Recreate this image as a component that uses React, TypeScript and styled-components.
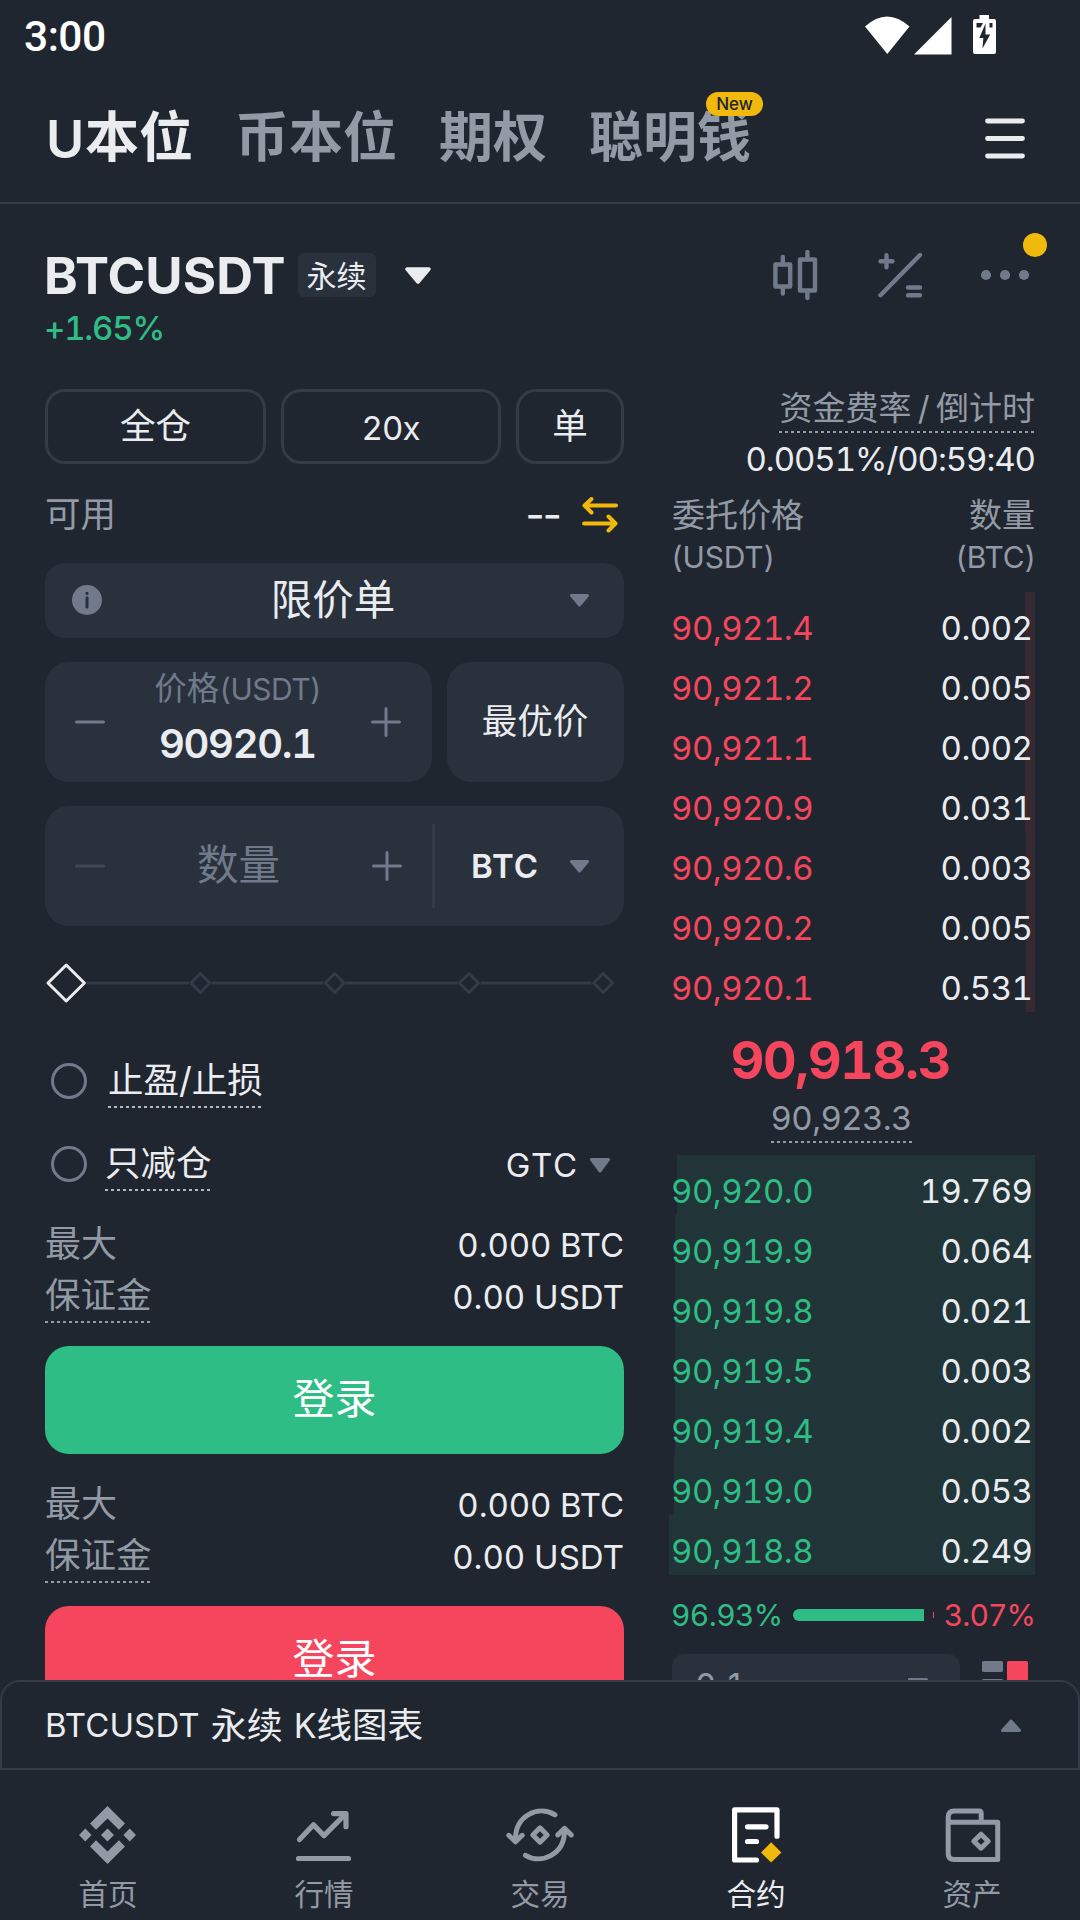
import React from "react";
import styled, { createGlobalStyle } from "styled-components";

const color = {
  bg: "#202630",
  input: "#29313d",
  line: "#333b47",
  primary: "#eaecef",
  secondary: "#929aa5",
  tertiary: "#707a8a",
  underline: "#b4b8bf",
  buy: "#2ebd85",
  sell: "#f6465d",
  brand: "#f0b90b",
};

const GlobalStyle = createGlobalStyle`
  *, *::before, *::after { box-sizing: border-box; }
  body {
    margin: 0;
    background: ${color.bg};
    color: ${color.primary};
    font-family: Inter, "Noto Sans CJK SC", sans-serif;
    font-variant-numeric: tabular-nums;
  }
`;

const Screen = styled.div`
  width: 1080px;
  height: 1920px;
  overflow: hidden;
  display: flex;
  flex-direction: column;
  background: ${color.bg};
`;

const Text = styled.span<{ $size?: number; $color?: string; $weight?: number; $ls?: number }>`
  flex: none;
  white-space: nowrap;
  line-height: 1;
  font-size: ${(p) => p.$size ?? 33}px;
  font-weight: ${(p) => p.$weight ?? 400};
  color: ${(p) => p.$color ?? color.primary};
  letter-spacing: ${(p) => p.$ls ?? 0}px;
  margin-right: ${(p) => -(p.$ls ?? 0)}px;
`;

/* ---------- status bar ---------- */

const StatusBar = styled.header`
  flex: none;
  height: 72px;
  padding: 0 84px 0 24px;
  display: flex;
  justify-content: space-between;
`;

const Clock = styled.span`
  font: 500 42.5px/74px Roboto, sans-serif;
  letter-spacing: -0.5px;
  color: #fff;
`;

const StatusIcons = styled.svg`
  margin-top: 10px;
`;

/* ---------- top tabs ---------- */

const TopTabs = styled.nav`
  flex: none;
  height: 132px;
  padding: 5px 52px 4px 46px;
  border-bottom: 2px solid ${color.line};
  display: flex;
  align-items: center;
  gap: 42px;
`;

const TabItem = styled.div<{ $active?: boolean }>`
  position: relative;
  display: flex;
  align-items: center;
  font-size: 54px;
  line-height: 60px;
  font-weight: 700;
  color: ${(p) => (p.$active ? color.primary : color.secondary)};
`;

const TabLatin = styled.span`
  font-size: 52px;
  font-weight: 600;
  width: 39px;
  padding-top: 5px;
`;

const NewBadge = styled.span`
  position: absolute;
  top: -16px;
  left: 117px;
  width: 57px;
  height: 24px;
  border-radius: 12px;
  background: ${color.brand};
  color: ${color.bg};
  font-size: 17px;
  font-weight: 500;
  line-height: 24px;
  text-align: center;
`;

const MenuIcon = styled.svg`
  margin-left: auto;
`;

/* ---------- pair header ---------- */

const PairHeader = styled.section`
  flex: none;
  height: 180px;
  padding: 45px 45px 0 44px;
`;

const PairRow = styled.div`
  height: 52px;
  display: flex;
  align-items: center;
`;

const ContractTag = styled.span`
  margin-left: 12px;
  width: 78px;
  height: 44px;
  border-radius: 6px;
  background: ${color.input};
  font-size: 30px;
  line-height: 46px;
  text-align: center;
`;

const PairCaret = styled.svg`
  margin-left: 29px;
`;

const PairTools = styled.div`
  margin-left: auto;
  display: flex;
  align-items: center;
  gap: 45px;
`;

const MoreButton = styled.div`
  position: relative;
  display: flex;
`;

const NoticeDot = styled.i`
  position: absolute;
  top: -16px;
  right: -12px;
  width: 24px;
  height: 24px;
  border-radius: 50%;
  background: ${color.brand};
`;

const Change = styled.div`
  height: 40px;
  margin-top: 7px;
  display: flex;
  align-items: center;
`;

/* ---------- trading body ---------- */

const Body = styled.main`
  flex: none;
  height: 1296px;
  padding: 0 45px;
  overflow: hidden;
  display: flex;
  align-items: flex-start;
  gap: 48px;
`;

const OrderForm = styled.section`
  width: 579px;
  padding-top: 5px;
  display: flex;
  flex-direction: column;
`;

const ModeRow = styled.div`
  display: grid;
  grid-template-columns: 221px 220px 108px;
  gap: 15px;
`;

const ModeButton = styled.div<{ $drop?: number }>`
  height: 75px;
  padding-top: ${(p) => p.$drop ?? 0}px;
  border: 3px solid ${color.line};
  border-radius: 20px;
  display: flex;
  align-items: center;
  justify-content: center;
`;

const AvailableRow = styled.div`
  height: 99px;
  padding: 3px 6px 0 0;
  display: flex;
  align-items: center;
  justify-content: space-between;
`;

const Inline = styled.div<{ $gap: number }>`
  display: flex;
  align-items: center;
  gap: ${(p) => p.$gap}px;
`;

const Select = styled.div`
  height: 75px;
  padding: 0 35px 1px 27px;
  border-radius: 20px;
  background: ${color.input};
  display: flex;
  align-items: center;
`;

const SelectLabel = styled.span`
  flex: 1;
  padding-right: 6px;
  font-size: 41.5px;
  line-height: 44px;
  text-align: center;
`;

const PriceRow = styled.div`
  margin-top: 24px;
  display: grid;
  grid-template-columns: 387px 177px;
  gap: 15px;
`;

const Field = styled.div`
  height: 120px;
  padding-right: 1px;
  border-radius: 24px;
  background: ${color.input};
  display: flex;
  align-items: center;
  justify-content: center;
`;

const Stepper = styled.div`
  width: 387px;
  height: 100%;
  padding: 0 30px;
  display: flex;
  align-items: center;
  justify-content: space-between;
`;

const PriceStack = styled.div`
  height: 100%;
  padding-top: 11px;
  display: flex;
  flex-direction: column;
  align-items: center;
  gap: 18px;
`;

const QuantityField = styled(Field)`
  margin-top: 24px;
  padding-right: 0;
  justify-content: flex-start;
`;

const UnitSelect = styled.div`
  flex: 1;
  height: 84px;
  padding: 1px 35px 0 36px;
  border-left: 3px solid ${color.line};
  display: flex;
  align-items: center;
  justify-content: space-between;
`;

const SliderBox = styled.div`
  height: 114px;
  display: flex;
  align-items: center;
`;

const OptionRow = styled.div<{ $h: number }>`
  height: ${(p) => p.$h}px;
  padding: 0 14px 0 6px;
  display: flex;
  align-items: center;
`;

const Radio = styled.i<{ $gap: number }>`
  width: 36px;
  height: 36px;
  margin-right: ${(p) => p.$gap}px;
  border: 3px solid ${color.tertiary};
  border-radius: 50%;
`;

const Hint = styled.span<{ $h: number; $line: string }>`
  display: inline-flex;
  align-items: center;
  height: ${(p) => p.$h}px;
  background: repeating-linear-gradient(90deg, ${(p) => p.$line} 0 3px, transparent 3px 6px) left bottom / 100% 2px no-repeat;
`;

const TimeInForce = styled.div`
  margin-left: auto;
  padding-top: 3px;
  display: flex;
  align-items: center;
  gap: 13px;
`;

const Summary = styled.div<{ $top: number }>`
  padding-top: ${(p) => p.$top}px;
`;

const SummaryRow = styled.div`
  height: 52px;
  display: flex;
  align-items: center;
  justify-content: space-between;
`;

const SummaryLabel = styled.div`
  height: 52px;
  margin-top: -3px;
  display: flex;
  align-items: center;
`;

const LoginButton = styled.div<{ $color: string }>`
  flex: none;
  height: 108px;
  margin-top: 23px;
  padding-bottom: 2px;
  border-radius: 24px;
  background: ${(p) => p.$color};
  display: flex;
  align-items: center;
  justify-content: center;
`;

/* ---------- order book ---------- */

const OrderBook = styled.section`
  width: 363px;
  display: flex;
  flex-direction: column;
`;

const Funding = styled.div`
  display: flex;
  flex-direction: column;
  align-items: flex-end;
`;

const FundingLabel = styled(Text)`
  word-spacing: -2.5px;
`;

const Countdown = styled.div`
  height: 52px;
  margin-right: -1px;
  display: flex;
  align-items: center;
`;

const BookHead = styled.div`
  height: 107px;
  padding-top: 8px;
  display: flex;
  justify-content: space-between;
`;

const BookHeadCell = styled.div<{ $end?: boolean }>`
  display: flex;
  flex-direction: column;
  align-items: ${(p) => (p.$end ? "flex-end" : "flex-start")};
`;

const HeadName = styled.span`
  font-size: 33px;
  line-height: 44px;
  color: ${color.secondary};
`;

const HeadUnit = styled.span`
  margin: 0 -1px;
  font-size: 30px;
  line-height: 41px;
  color: ${color.secondary};
  letter-spacing: -0.2px;
`;

const BookRow = styled.div<{ $depth: number; $tint: string }>`
  height: 60px;
  margin-left: -3px;
  padding: 12px 2px 0;
  display: flex;
  align-items: center;
  justify-content: space-between;
  background: linear-gradient(${(p) => p.$tint}, ${(p) => p.$tint}) right top / ${(p) => p.$depth}px 100% no-repeat;
`;

const LastPrice = styled.div`
  height: 143px;
  padding-top: 16px;
  display: flex;
  flex-direction: column;
  align-items: center;
`;

const LastPriceValue = styled.div`
  height: 65px;
  margin-right: 25px;
  display: flex;
  align-items: center;
`;

const MarkPrice = styled.div`
  margin-right: 24px;
`;

const RatioRow = styled.div`
  height: 79px;
  margin: 0 -1px;
  display: flex;
  align-items: center;
`;

const RatioBar = styled.div`
  flex: 1;
  margin: 0 10px 0 10px;
  display: flex;
  align-items: center;
  justify-content: space-between;
`;

const RatioBuy = styled.i`
  flex: none;
  width: 131px;
  height: 12px;
  border-radius: 6px 0 0 6px;
  background: ${color.buy};
`;

const RatioSell = styled.i`
  flex: none;
  width: 1px;
  height: 6px;
  background: ${color.sell};
`;

const BookFooter = styled.div`
  display: flex;
  justify-content: space-between;
  padding-right: 7px;
`;

const TickSelect = styled.div`
  width: 288px;
  height: 62px;
  padding: 0 32px 0 23px;
  border-radius: 12px;
  background: ${color.input};
  display: flex;
  align-items: center;
  justify-content: space-between;
`;

const BookLayoutIcon = styled.svg`
  margin-top: 7px;
`;

/* ---------- bottom ---------- */

const ChartPanel = styled.section`
  flex: none;
  height: 90px;
  padding: 1px 57px 0 43px;
  border: 2px solid ${color.line};
  border-radius: 20px 20px 0 0;
  display: flex;
  align-items: center;
  justify-content: space-between;
`;

const ChartTitle = styled.div`
  display: flex;
  align-items: center;
  gap: 11px;
`;

const BottomNav = styled.nav`
  flex: none;
  height: 150px;
  padding-top: 35px;
  display: grid;
  grid-template-columns: repeat(5, 216px);
`;

const NavItem = styled.div<{ $active?: boolean }>`
  display: flex;
  flex-direction: column;
  align-items: center;
  gap: 14px;
  color: ${(p) => (p.$active ? color.primary : color.secondary)};
  font-size: 29.6px;
  line-height: 30px;
`;

/* ---------- icons ---------- */

const Caret = ({ w, h, fill, up }: { w: number; h: number; fill: string; up?: boolean }) => (
  <svg width={w} height={h} viewBox={`0 0 ${w} ${h}`}>
    <path
      d={up ? `M${w / 2} 2 L${w - 1.5} ${h - 1.5} H1.5 Z` : `M1.5 1.5 H${w - 1.5} L${w / 2} ${h - 2} Z`}
      fill={fill}
      stroke={fill}
      strokeWidth="3"
      strokeLinejoin="round"
    />
  </svg>
);

const Minus = ({ faded }: { faded?: boolean }) => (
  <svg width="30" height="30" viewBox="0 0 30 30">
    <path d="M1.5 15H28.5" stroke={faded ? "#414855" : color.tertiary} strokeWidth="3" strokeLinecap="round" />
  </svg>
);

const Plus = () => (
  <svg width="30" height="30" viewBox="0 0 30 30">
    <path d="M1.5 15H28.5M15 1.5V28.5" stroke={color.tertiary} strokeWidth="3" strokeLinecap="round" />
  </svg>
);

const TransferIcon = () => (
  <svg width="36" height="36" viewBox="0 0 36 36" fill="none" stroke={color.brand} strokeWidth="4" strokeLinecap="round" strokeLinejoin="round">
    <path d="M34 8.5H2.5M9.5 2L2.5 8.5L9.5 15.5M2 26.5H33.5M26.5 19.5L33.5 26.5L26.5 33.5" />
  </svg>
);

const InfoIcon = () => (
  <svg width="30" height="30" viewBox="0 0 30 30">
    <circle cx="15" cy="15" r="15" fill={color.tertiary} />
    <path d="M15 12.8V22" stroke={color.input} strokeWidth="3" strokeLinecap="round" />
    <circle cx="15" cy="8.4" r="1.6" fill={color.input} />
  </svg>
);

const CandleIcon = () => (
  <svg width="46" height="52" viewBox="0 0 46 52" fill="none" stroke={color.tertiary} strokeWidth="4.4" strokeLinecap="round" strokeLinejoin="round">
    <path d="M9.8 8V15M9.8 38V44.5M34.4 3V10M34.4 42V49" />
    <rect x="2.4" y="15.5" width="14.8" height="22" />
    <rect x="27" y="10.5" width="15" height="31" />
  </svg>
);

const CalculatorIcon = () => (
  <svg width="46" height="52" viewBox="0 0 46 52" fill="none" stroke={color.tertiary} strokeWidth="4.4" strokeLinecap="round">
    <path d="M2.5 46.2L42 6M2.5 12.2H14.5M8.5 6.2V18.2M30 38.5H42M30 46.2H42" />
  </svg>
);

const MoreIcon = () => (
  <svg width="66" height="52" viewBox="0 0 66 52" fill={color.tertiary}>
    <circle cx="17" cy="26" r="5.1" />
    <circle cx="36" cy="26" r="5.1" />
    <circle cx="55" cy="26" r="5.1" />
  </svg>
);

const SizeSlider = () => (
  <svg width="579" height="42" viewBox="0 0 579 42" fill="none" stroke={color.line} strokeWidth="3" strokeLinejoin="round">
    <path d="M41 21H144M167 21H278M301 21H412.5M435.5 21H546.5" />
    {[155.4, 289.7, 424, 558.2].map((x) => (
      <path key={x} d={`M${x - 9.5} 21L${x} 11.5L${x + 9.5} 21L${x} 30.5Z`} />
    ))}
    <path d="M3 21L21.2 3L39.4 21L21.2 39Z" stroke={color.primary} />
  </svg>
);

const HomeIcon = () => (
  <svg width="60" height="60" viewBox="0 0 60 60" fill="currentColor">
    <path d="M29.5 1L47 18.5L41 24.8L29.5 13.5L18 24.8L12 18.5Z" />
    <path d="M29.5 59L47 41.5L41 35.2L29.5 46.5L18 35.2L12 41.5Z" />
    <path d="M29.5 23.4L36 30L29.5 36.6L23 30Z" />
    <path d="M7.3 23.4L13.6 30L7.3 36.6L1 30Z" />
    <path d="M51.7 23.4L58 30L51.7 36.6L45.4 30Z" />
  </svg>
);

const MarketIcon = () => (
  <svg width="60" height="60" viewBox="0 0 60 60" fill="none" stroke="currentColor" strokeWidth="5.2" strokeLinecap="round" strokeLinejoin="round">
    <path d="M5.5 34.5L19.5 19.7L30 30.7L51.5 9M39.6 8.6H52V21.7M4.5 53.5H54.5" />
  </svg>
);

const TradeIcon = () => (
  <svg width="68" height="60" viewBox="0 0 68 60" fill="none" stroke="currentColor" strokeWidth="5" strokeLinecap="round" strokeLinejoin="round">
    <path d="M49 9.8C32 -0.5 9.5 11 9.5 34" />
    <path d="M2.8 30.3L9.5 36.8L16.2 30.3" />
    <path d="M19.5 50.3C36 60 58.5 49 58.5 26" />
    <path d="M51.8 29.9L58.5 23.4L65.2 29.9" />
    <path d="M34 22.8L41.2 30L34 37.2L26.8 30Z" />
  </svg>
);

const FuturesIcon = () => (
  <svg width="60" height="60" viewBox="0 0 60 60" fill="none" stroke="#fff" strokeWidth="5.2" strokeLinecap="round" strokeLinejoin="round">
    <path d="M30.5 55H8.6V4.8H51V31.2M21.5 21.8H40M21.5 36.5H30.5" />
    <path d="M45.2 37.2L55.4 47.4L45.2 57.6L35 47.4Z" fill={color.brand} stroke="none" />
  </svg>
);

const WalletIcon = () => (
  <svg width="60" height="60" viewBox="0 0 60 60" fill="none" stroke="currentColor" strokeWidth="5" strokeLinejoin="round">
    <path d="M6.2 17V12Q6.2 6 12.2 6H37Q39.2 6 39.2 8.2V17.2M6.2 16V48.7Q6.2 54.5 12.2 54.5H55.7V17.2H6.2" />
    <path d="M39 29.2L46.2 36.2L39 43.2L31.8 36.2Z" />
  </svg>
);

/* ---------- data ---------- */

type Level = { price: string; amount: string; depth: number };

const asks: Level[] = [
  { price: "90,921.4", amount: "0.002", depth: 10 },
  { price: "90,921.2", amount: "0.005", depth: 10 },
  { price: "90,921.1", amount: "0.002", depth: 10 },
  { price: "90,920.9", amount: "0.031", depth: 10 },
  { price: "90,920.6", amount: "0.003", depth: 9 },
  { price: "90,920.2", amount: "0.005", depth: 9 },
  { price: "90,920.1", amount: "0.531", depth: 9 },
];

const bids: Level[] = [
  { price: "90,920.0", amount: "19.769", depth: 358 },
  { price: "90,919.9", amount: "0.064", depth: 360 },
  { price: "90,919.8", amount: "0.021", depth: 360 },
  { price: "90,919.5", amount: "0.003", depth: 360 },
  { price: "90,919.4", amount: "0.002", depth: 360 },
  { price: "90,919.0", amount: "0.053", depth: 361 },
  { price: "90,918.8", amount: "0.249", depth: 366 },
];

const Levels = ({ rows, tone, tint }: { rows: Level[]; tone: string; tint: string }) => (
  <div>
    {rows.map((row) => (
      <BookRow key={row.price} $depth={row.depth} $tint={tint}>
        <Text $color={tone} $ls={-0.5}>{row.price}</Text>
        <Text $ls={-0.5}>{row.amount}</Text>
      </BookRow>
    ))}
  </div>
);

const OrderSide = ({ top, tone }: { top: number; tone: string }) => (
  <Summary $top={top}>
    <SummaryRow>
      <SummaryLabel>
        <Text $size={36} $color={color.secondary}>最大</Text>
      </SummaryLabel>
      <Text $ls={-0.1}>0.000 BTC</Text>
    </SummaryRow>
    <SummaryRow>
      <SummaryLabel>
        <Hint $h={54} $line={color.secondary}>
          <Text $size={35.5} $color={color.secondary}>保证金</Text>
        </Hint>
      </SummaryLabel>
      <Text>0.00 USDT</Text>
    </SummaryRow>
    <LoginButton $color={tone}>
      <Text $size={42} $color="#fff">登录</Text>
    </LoginButton>
  </Summary>
);

export default function App() {
  return (
    <Screen>
      <GlobalStyle />
      <StatusBar>
        <Clock>3:00</Clock>
        <StatusIcons width="132" height="48" viewBox="0 0 132 48" fill="#fff">
          <path d="M1 16.5Q23 -3.5 45.5 16.5L23.3 44Z" />
          <path d="M50 44.4L87.5 7V44.4Z" />
          <path d="M115.5 5H125V9H130Q132 9 132 11V42Q132 44 130 44H111Q109 44 109 42V11Q109 9 111 9H115.5Z" />
          <path d="M112.5 13H119L116.5 17.5H112.5ZM125.5 13H128.5V17.5H125.5Z" fill={color.bg} />
          <path d="M121.5 13.5L115.3 28H119.3L118.5 38.5L126.2 24.5H121.5Z" fill={color.bg} />
        </StatusIcons>
      </StatusBar>

      <TopTabs>
        <TabItem $active>
          <TabLatin>U</TabLatin>本位
        </TabItem>
        <TabItem>币本位</TabItem>
        <TabItem>期权</TabItem>
        <TabItem>
          聪明钱
          <NewBadge>New</NewBadge>
        </TabItem>
        <MenuIcon width="46" height="46" viewBox="0 0 46 46" stroke={color.primary} strokeWidth="4.8" strokeLinecap="round">
          <path d="M5.5 6H40.5M5.5 23.5H40.5M5.5 41H40.5" />
        </MenuIcon>
      </TopTabs>

      <PairHeader>
        <PairRow>
          <Text $size={51} $weight={700} $ls={0.1}>BTCUSDT</Text>
          <ContractTag>永续</ContractTag>
          <PairCaret width="26" height="17" viewBox="0 0 26 17">
            <path d="M2 2H24L13 15Z" fill={color.primary} stroke={color.primary} strokeWidth="3.5" strokeLinejoin="round" />
          </PairCaret>
          <PairTools>
            <Inline $gap={59}>
              <CandleIcon />
              <CalculatorIcon />
            </Inline>
            <MoreButton>
              <MoreIcon />
              <NoticeDot />
            </MoreButton>
          </PairTools>
        </PairRow>
        <Change>
          <Text $weight={500} $color={color.buy} $ls={-1.2}>+1.65%</Text>
        </Change>
      </PairHeader>

      <Body>
        <OrderForm>
          <ModeRow>
            <ModeButton><Text $size={35.5}>全仓</Text></ModeButton>
            <ModeButton $drop={4}><Text $ls={-0.8}>20x</Text></ModeButton>
            <ModeButton><Text $size={35.5}>单</Text></ModeButton>
          </ModeRow>

          <AvailableRow>
            <Text $size={35.5} $color={color.secondary}>可用</Text>
            <Inline $gap={16}>
              <Text $size={42} $ls={-10}>--</Text>
              <TransferIcon />
            </Inline>
          </AvailableRow>

          <Select>
            <InfoIcon />
            <SelectLabel>限价单</SelectLabel>
            <Caret w={19} h={13} fill={color.tertiary} />
          </Select>

          <PriceRow>
            <Field>
              <Stepper>
                <Minus />
                <PriceStack>
                  <Inline $gap={0}>
                    <Text $size={32.5} $color={color.tertiary}>价格</Text>
                    <Text $size={30} $color={color.tertiary} $ls={-0.5}>(USDT)</Text>
                  </Inline>
                  <Text $size={40} $weight={600} $ls={-1.3}>90920.1</Text>
                </PriceStack>
                <Plus />
              </Stepper>
            </Field>
            <Field><Text $size={35.5}>最优价</Text></Field>
          </PriceRow>

          <QuantityField>
            <Stepper>
              <Minus faded />
              <Text $size={41.5} $color={color.tertiary}>数量</Text>
              <Plus />
            </Stepper>
            <UnitSelect>
              <Text $weight={600} $ls={1}>BTC</Text>
              <Caret w={19} h={13} fill={color.tertiary} />
            </UnitSelect>
          </QuantityField>

          <SliderBox>
            <SizeSlider />
          </SliderBox>

          <OptionRow $h={82}>
            <Radio $gap={21} />
            <Hint $h={54} $line={color.underline}><Text $size={35.5}>止盈/止损</Text></Hint>
          </OptionRow>
          <OptionRow $h={84}>
            <Radio $gap={18} />
            <Hint $h={54} $line={color.underline}><Text $size={35.5}>只减仓</Text></Hint>
            <TimeInForce>
              <Text $ls={1.6}>GTC</Text>
              <Caret w={20} h={15} fill={color.tertiary} />
            </TimeInForce>
          </OptionRow>

          <OrderSide top={13} tone={color.buy} />
          <OrderSide top={25} tone={color.sell} />
        </OrderForm>

        <OrderBook>
          <Funding>
            <Hint $h={49} $line={color.secondary}>
              <FundingLabel $size={33} $color={color.secondary}>资金费率 / 倒计时</FundingLabel>
            </Hint>
            <Countdown><Text $ls={-1.05}>0.0051%/00:59:40</Text></Countdown>
          </Funding>

          <BookHead>
            <BookHeadCell>
              <HeadName>委托价格</HeadName>
              <HeadUnit>(USDT)</HeadUnit>
            </BookHeadCell>
            <BookHeadCell $end>
              <HeadName>数量</HeadName>
              <HeadUnit>(BTC)</HeadUnit>
            </BookHeadCell>
          </BookHead>

          <Levels rows={asks} tone={color.sell} tint="rgba(246, 70, 93, 0.1)" />

          <LastPrice>
            <LastPriceValue>
              <Text $size={52} $weight={700} $color={color.sell} $ls={-1.3}>90,918.3</Text>
            </LastPriceValue>
            <MarkPrice>
              <Hint $h={50} $line={color.secondary}>
                <Text $color={color.secondary} $ls={-0.6}>90,923.3</Text>
              </Hint>
            </MarkPrice>
          </LastPrice>

          <Levels rows={bids} tone={color.buy} tint="rgba(46, 189, 133, 0.1)" />

          <RatioRow>
            <Text $size={30} $color={color.buy} $ls={-0.6}>96.93%</Text>
            <RatioBar>
              <RatioBuy />
              <RatioSell />
            </RatioBar>
            <Text $size={30} $color={color.sell} $ls={-0.9}>3.07%</Text>
          </RatioRow>

          <BookFooter>
            <TickSelect>
              <Text $color={color.secondary}>0.1</Text>
              <Caret w={20} h={14} fill={color.tertiary} />
            </TickSelect>
            <BookLayoutIcon width="46" height="46" viewBox="0 0 46 46">
              <rect x="0" y="0" width="21" height="11" rx="1.5" fill={color.tertiary} />
              <rect x="0" y="18" width="21" height="11" rx="1.5" fill={color.tertiary} />
              <rect x="0" y="35" width="21" height="11" rx="1.5" fill={color.tertiary} />
              <rect x="25" y="0" width="21" height="21" rx="1.5" fill={color.sell} />
              <rect x="25" y="25" width="21" height="21" rx="1.5" fill={color.buy} />
            </BookLayoutIcon>
          </BookFooter>
        </OrderBook>
      </Body>

      <ChartPanel>
        <ChartTitle>
          <Text $ls={0.1}>BTCUSDT</Text>
          <Text $size={36}>永续</Text>
          <Inline $gap={0}>
            <Text $size={34}>K</Text>
            <Text $size={35.5}>线图表</Text>
          </Inline>
        </ChartTitle>
        <Caret w={20} h={13} fill={color.tertiary} up />
      </ChartPanel>

      <BottomNav>
        <NavItem><HomeIcon />首页</NavItem>
        <NavItem><MarketIcon />行情</NavItem>
        <NavItem><TradeIcon />交易</NavItem>
        <NavItem $active><FuturesIcon />合约</NavItem>
        <NavItem><WalletIcon />资产</NavItem>
      </BottomNav>
    </Screen>
  );
}
